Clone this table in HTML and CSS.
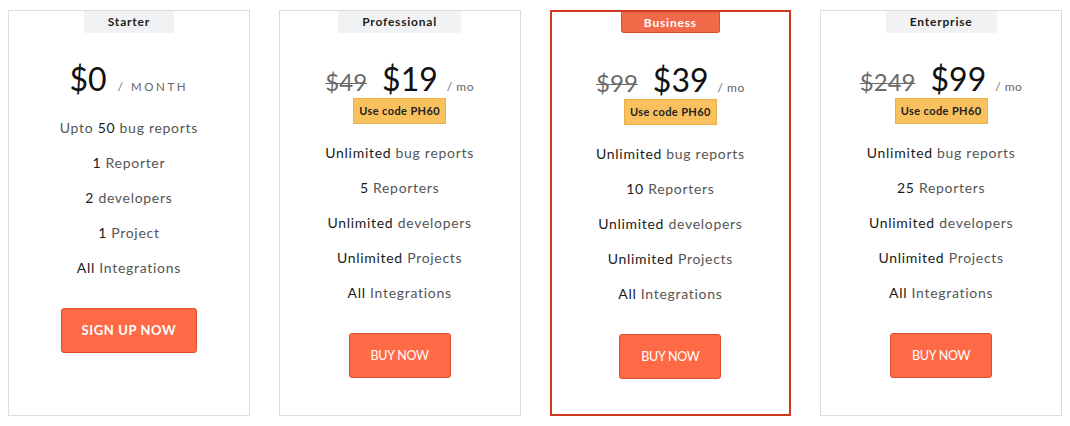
FILE: index.html
```html
<!DOCTYPE html>
<html>
<head>
<meta charset="utf-8">
<link rel="stylesheet" href="styles.css">
</head>
<body>
<div class="plans">
  <div class="card">
    <div class="tab">Starter</div>
    <div class="price"><span class="amount">$0</span><span class="per per-month">/ MONTH</span></div>
    <ul class="features first">
      <li>Upto <b>50</b> bug reports</li>
      <li><b>1</b> Reporter</li>
      <li><b>2</b> developers</li>
      <li><b>1</b> Project</li>
      <li><b>All</b> Integrations</li>
    </ul>
    <a class="btn btn-signup">SIGN UP NOW</a>
  </div>
  <div class="card">
    <div class="tab">Professional</div>
    <div class="price"><s class="old">$49</s><span class="amount">$19</span><span class="per">/ mo</span></div>
    <div class="promo">Use code PH60</div>
    <ul class="features">
      <li><b>Unlimited</b> bug reports</li>
      <li><b>5</b> Reporters</li>
      <li><b>Unlimited</b> developers</li>
      <li><b>Unlimited</b> Projects</li>
      <li><b>All</b> Integrations</li>
    </ul>
    <a class="btn">BUY NOW</a>
  </div>
  <div class="card featured">
    <div class="tab tab-hot">Business</div>
    <div class="price"><s class="old">$99</s><span class="amount">$39</span><span class="per">/ mo</span></div>
    <div class="promo">Use code PH60</div>
    <ul class="features">
      <li><b>Unlimited</b> bug reports</li>
      <li><b>10</b> Reporters</li>
      <li><b>Unlimited</b> developers</li>
      <li><b>Unlimited</b> Projects</li>
      <li><b>All</b> Integrations</li>
    </ul>
    <a class="btn">BUY NOW</a>
  </div>
  <div class="card">
    <div class="tab">Enterprise</div>
    <div class="price"><s class="old">$249</s><span class="amount">$99</span><span class="per">/ mo</span></div>
    <div class="promo">Use code PH60</div>
    <ul class="features">
      <li><b>Unlimited</b> bug reports</li>
      <li><b>25</b> Reporters</li>
      <li><b>Unlimited</b> developers</li>
      <li><b>Unlimited</b> Projects</li>
      <li><b>All</b> Integrations</li>
    </ul>
    <a class="btn">BUY NOW</a>
  </div>
</div>
</body>
</html>
```

FILE: styles.css
```css
* { box-sizing: border-box; }
html, body { background: #fff; }
body {
  margin: 10px 8px 0 8px;
  font-family: "Lato", "Open Sans", sans-serif;
  color: #222;
}
.plans {
  display: grid;
  grid-template-columns: repeat(4, 1fr);
  column-gap: 29px;
}
.card {
  height: 406px;
  border: 1px solid #dcdcdc;
  display: flex;
  flex-direction: column;
  align-items: center;
}
.card.featured {
  border: 2px solid #cf3a1f;
}
.tab {
  height: 22px;
  line-height: 22px;
  padding: 0 24px;
  background: #f1f2f3;
  font-size: 12px;
  font-weight: 700;
  letter-spacing: 0.8px;
  color: #1d1d1d;
  border-radius: 0 0 2px 2px;
}
.tab-hot {
  background: #f2694a;
  color: #fff;
  border: 1px solid #d9502f;
  border-top: none;
  padding: 0 22px;
  border-radius: 0 0 3px 3px;
  height: 21px;
  line-height: 21px;
}
.price {
  margin-top: 26px;
  height: 40px;
  display: flex;
  align-items: baseline;
  justify-content: center;
  line-height: 40px;
}
.featured .price { margin-top: 27px; }
.amount {
  font-size: 32px;
  font-weight: 400;
  color: #111;
}
.old {
  font-size: 24px;
  font-weight: 400;
  color: #6a6a6a;
  margin-right: 15px;
  text-decoration-thickness: 1px;
}
.per {
  font-size: 12px;
  color: #666;
  margin-left: 9px;
  letter-spacing: 0.5px;
}
.per-month {
  margin-left: 11px;
  letter-spacing: 2.6px;
  font-size: 11.5px;
}
.promo {
  margin-top: -1px;
  height: 26px;
  line-height: 24px;
  padding: 0 5px;
  background: #f9c15e;
  border: 1px solid #ebb04a;
  font-size: 11px;
  font-weight: 700;
  letter-spacing: 0.4px;
  color: #222;
}
.features {
  list-style: none;
  margin: 11px 0 0 0;
  padding: 0;
  text-align: center;
}
.features.first { margin-top: 10.5px; }
.features li {
  height: 35px;
  line-height: 35px;
  font-size: 14px;
  letter-spacing: 0.7px;
  color: #555;
}
.features b {
  font-weight: 400;
  color: #1a1a1a;
}
.btn {
  margin-top: 22.5px;
  height: 45px;
  line-height: 43px;
  padding: 0 21px;
  background: #ff6a46;
  border: 1px solid #dd4f2c;
  border-radius: 3px;
  color: #fff;
  font-size: 12.5px;
  font-weight: 400;
  letter-spacing: -0.3px;
  text-decoration: none;
  cursor: pointer;
}
.btn-signup {
  margin-top: 23.5px;
  padding: 0 20px;
  font-weight: 700;
  letter-spacing: 0.6px;
  font-size: 13px;
}
```
